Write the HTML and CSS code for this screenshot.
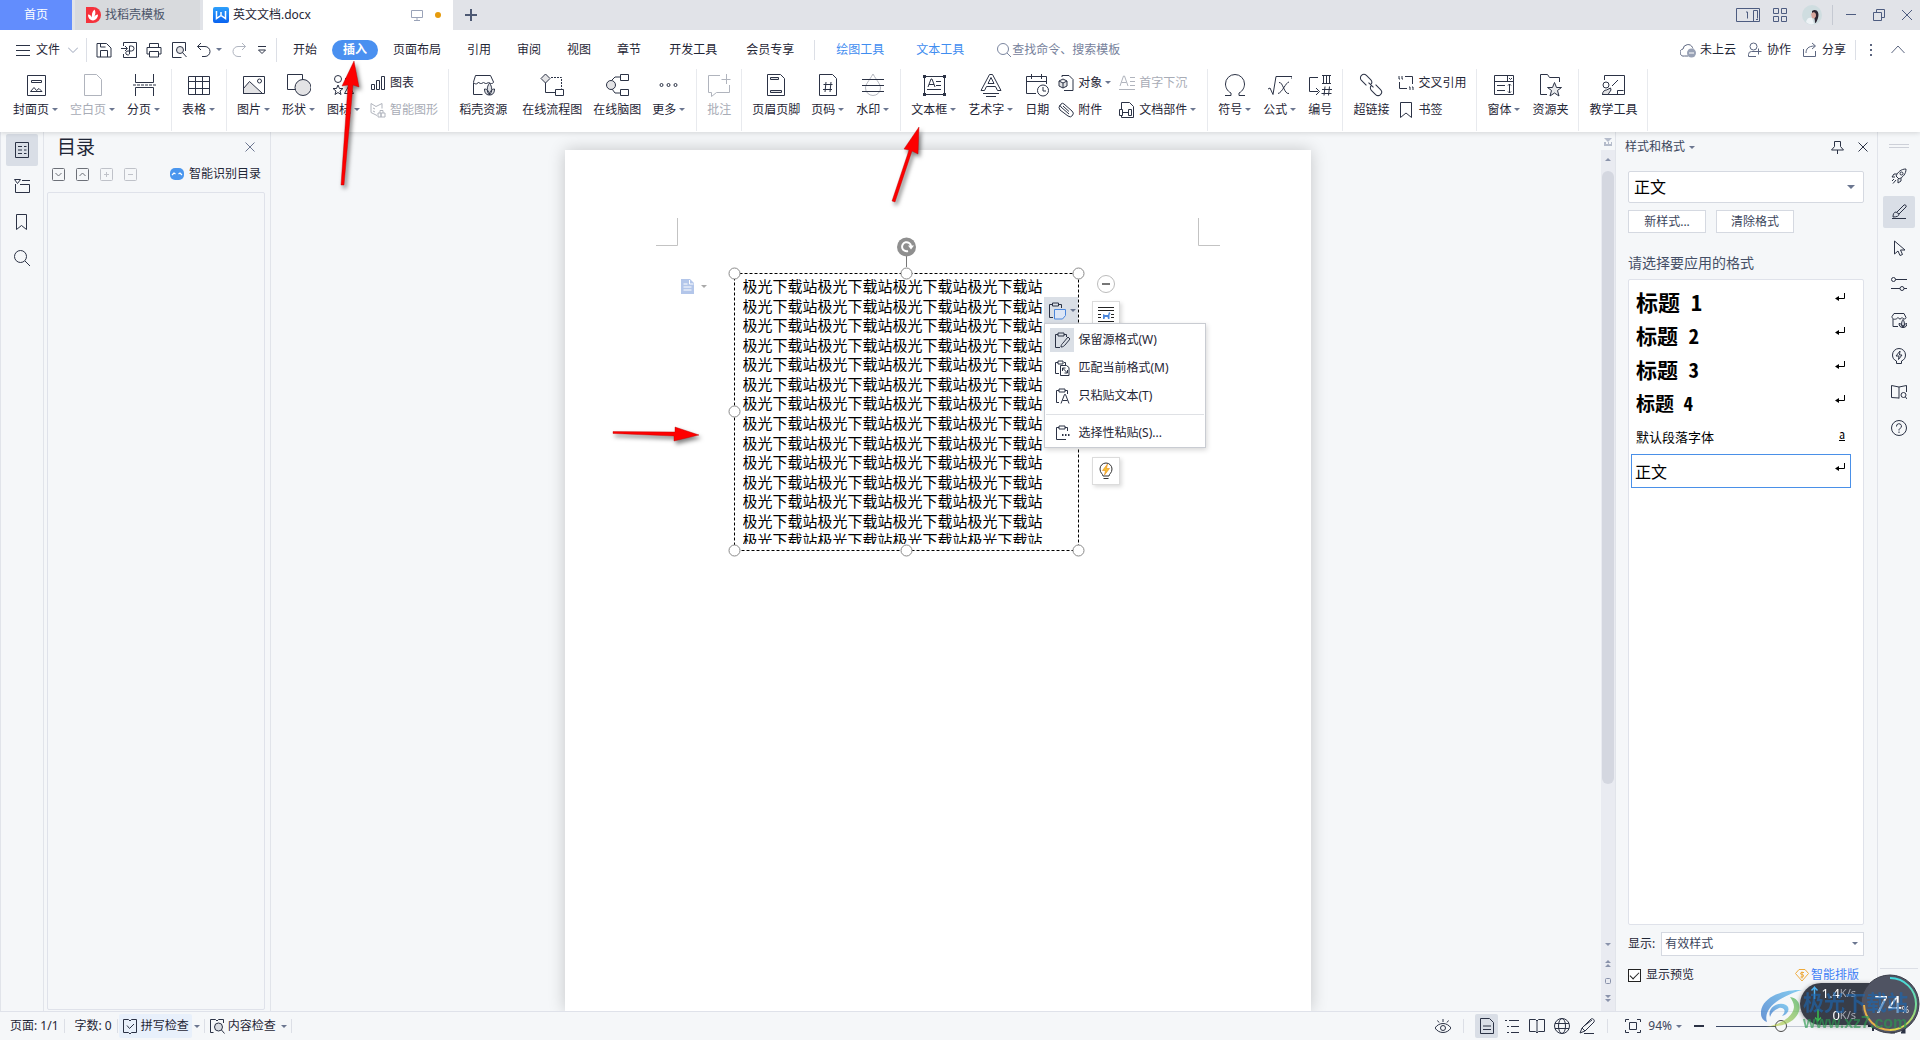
FILE: index.html
```html
<!DOCTYPE html>
<html lang="zh-CN">
<head>
<meta charset="utf-8">
<title>英文文档.docx</title>
<link rel="stylesheet" href="styles.css">
</head>
<body>
<header class="top">
  <div class="titlebar">
    <button class="tab tab-home">首页</button>
    <button class="tab tab-idle">
      <svg class="i16 logo" viewBox="0 0 16 16"><path d="M1 0h7a8 8 0 0 1 0 16H1z" fill="#f5323c"/><path d="M8 13.500C4.500 13 3 10.500 3 7.500c2 0 3.500 1.500 4 3C6.500 8 7 4.500 9.500 2.500c1.500 2.500 1 5-.5 7.500 1-1.500 2-2.500 4-2.500 0 3-2 5.500-5 6z" fill="#fff"/></svg>
      找稻壳模板</button>
    <button class="tab tab-active">
      <svg class="i16 logo" viewBox="0 0 16 16"><defs><linearGradient id="wg" x1="0" y1="0" x2="0" y2="1"><stop offset="0" stop-color="#2ea0fb"/><stop offset="1" stop-color="#0a63f0"/></linearGradient></defs><rect width="16" height="16" rx="2" fill="url(#wg)"/><path d="M3.500 4v7.500L8 8.500l4.500 3V4M8 8.500V5" fill="none" stroke="#fff" stroke-width="1.500"/></svg>
      <span class="grow">英文文档.docx</span>
      <svg class="i12 soft" viewBox="0 0 12 12"><path d="M.5 1.500h11v7H.5zM6 8.500V11M3 11.500h6"/></svg>
      <span class="dot"></span>
    </button>
    <button class="plus" aria-label="新建"><svg class="i12" viewBox="0 0 12 12"><path d="M6 0v12M0 6h12" stroke-width="2"/></svg></button>
    <div class="window-tools">
      <svg class="w24" viewBox="0 0 24 16"><path d="M.5 1.500h23v13H.5zM10 5h1.500v6.500M17.500 14V3.500h4v8M20 12.500h2"/></svg>
      <svg class="i16" viewBox="0 0 16 16"><path d="M1.500 1.500h5v5h-5zM9.500 1.500h5v5h-5zM1.500 9.500h5v5h-5zM9.500 9.500h5v5h-5z"/></svg>
      <svg class="i20 logo" viewBox="0 0 20 20"><circle cx="10" cy="10" r="10" fill="#cfdde0"/><path d="M10 6c4-3 8 1 6 7-1 3-2 5-3 5 0-4-1-7-3-9z" fill="#2b2430"/><path d="M9 9c2-3 5-2 5 1s-2 4-4 3z" fill="#d8a59c"/><path d="M4 17c1-4 3-5 6-4l2 6c-3 1-6 0-8-2z" fill="#eef3f6"/></svg>
      <span class="bar bar-tall"></span>
      <button aria-label="最小化"><svg class="i12" viewBox="0 0 12 12"><path d="M1 5.500h10"/></svg></button>
      <button aria-label="还原"><svg class="i12" viewBox="0 0 12 12"><path d="M.5 3.500h8v8h-8zM3.500 3V.5h8v8H9"/></svg></button>
      <button aria-label="关闭"><svg class="i12" viewBox="0 0 12 12"><path d="M1 1l10 10M11 1L1 11"/></svg></button>
    </div>
  </div>

  <nav class="menubar">
    <button class="file"><svg class="i16" viewBox="0 0 16 16"><path d="M1 3.500h14M1 8.500h14M1 13.500h14"/></svg>文件<svg class="i10 soft" viewBox="0 0 10 10"><path d="M0 2.500l5 5 5-5"/></svg></button>
    <span class="bar bar-quick"></span>
    <div class="quick">
      <svg class="i16" viewBox="0 0 16 16"><path d="M1 1.500h9.500l4.500 4.500v9H1zM4.500 15V8.500h7V15M4.500 1.500V5h5"/></svg>
      <svg class="i16" viewBox="0 0 16 16"><path d="M2.500 4V.5h13v15h-13V12M0 6.500h6M4 4l2.500 2.500L4 9M8.500 12V4h2a2 2 0 0 1 0 5H7a2 2 0 1 0 1.500 3"/></svg>
      <svg class="i16" viewBox="0 0 16 16"><path d="M3.500 5V1.500h9V5M3.500 12H1V5.500h14V12h-2.500M3.500 9.500h9v5.500h-9z"/></svg>
      <svg class="i16" viewBox="0 0 16 16"><path d="M14.500 9V.5h-13v15h9"/><circle cx="9" cy="8" r="3.500" fill="#e3e3e5"/><path d="M11.500 10.500l4 4.500"/></svg>
      <svg class="i16" viewBox="0 0 16 16"><path d="M5 1L1.500 4.500 5 8M1.500 4.500H9a5 5 0 0 1 0 10H6"/></svg><span class="caret"></span>
      <svg class="i16 faint" viewBox="0 0 16 16"><path d="M11 1l3.500 3.500L11 8M14.500 4.500H7a5 5 0 0 0 0 10h3"/></svg>
      <svg class="i12" viewBox="0 0 12 12"><path d="M2 2.500h8M2.500 6L6 9.500 9.500 6z"/></svg>
    </div>
    <span class="bar bar-quick"></span>
    <div class="tabs">
      <button>开始</button><button class="on">插入</button><button>页面布局</button><button>引用</button><button>审阅</button><button>视图</button><button>章节</button><button class="wide">开发工具</button><button class="wide">会员专享</button>
      <span class="bar"></span>
      <button class="blue">绘图工具</button><button class="blue">文本工具</button>
    </div>
    <label class="search"><svg class="i16" viewBox="0 0 16 16"><circle cx="7" cy="7" r="5.500"/><path d="M11 11l4 4"/></svg><input type="text" placeholder="查找命令、搜索模板" aria-label="查找命令"></label>
    <div class="share">
      <button><svg class="i16" viewBox="0 0 16 16"><path d="M8 14H4.500A3.500 3.500 0 0 1 3 7a5 5 0 0 1 9.500-1.500l.5 1"/><circle cx="11.500" cy="11" r="4.500" fill="#98a1b5" stroke="none"/><path d="M9 11h5" stroke="#fff"/></svg>未上云</button>
      <button><svg class="i16" viewBox="0 0 16 16"><circle cx="6.500" cy="4.500" r="3.500"/><path d="M9 14.500H1.500v-2a3 3 0 0 1 3-3H9M11.500 6.500v6M8.500 9.500h6"/></svg>协作</button>
      <button><svg class="i16" viewBox="0 0 16 16"><path d="M1.500 7v7.500h12V9M4 11c0-4 2-7 9-7M10 1l3.500 3L10 7"/></svg>分享</button>
      <span class="bar"></span>
      <button aria-label="更多"><svg class="i16" viewBox="0 0 16 16"><path d="M8 2v2M8 7v2M8 12v2" stroke-width="2"/></svg></button>
      <button aria-label="收起"><svg class="i16" viewBox="0 0 16 16"><path d="M1.500 11L8 4l6.500 7"/></svg></button>
    </div>
  </nav>

  <div class="ribbon">
    <div class="group">
      <button class="big"><svg viewBox="0 0 24 24"><path d="M3.500 2.500h18v20h-18zM7.500 7.500h10v2h-10zM6.500 18.500l3.500-4 2.500 3 2.500-2 3 3z"/></svg><span>封面页<i class="caret"></i></span></button>
      <button class="big off"><svg viewBox="0 0 24 24"><path d="M3.500 1.500h12l5 5v16h-17z"/></svg><span>空白页<i class="caret"></i></span></button>
      <button class="big"><svg viewBox="0 0 24 24"><path d="M3.500 1v8.500h18V1M3.500 23v-8.500h18V23"/><path d="M1 12h23" stroke-dasharray="3 1"/></svg><span>分页<i class="caret"></i></span></button>
    </div>
    <div class="group">
      <button class="big"><svg viewBox="0 0 24 24"><path d="M1.500 3.500h21v18h-21zM1.500 8.500h21M1.500 15.500h21M8.500 3.500v18M15.500 3.500v18"/></svg><span>表格<i class="caret"></i></span></button>
    </div>
    <div class="group">
      <button class="big"><svg viewBox="0 0 24 24"><path d="M1.500 20.500v-5l6-7 13 12z" fill="#e3e3e5"/><path d="M1.500 3.500h21v17h-21z"/><circle cx="17.500" cy="8" r="2"/></svg><span>图片<i class="caret"></i></span></button>
      <button class="big"><svg viewBox="0 0 24 24"><path d="M.5 1.500h15v15H.5z"/><circle cx="16" cy="14.500" r="8" fill="#e3e3e5"/></svg><span>形状<i class="caret"></i></span></button>
      <button class="big"><svg viewBox="0 0 24 24"><circle cx="6" cy="6" r="3.500"/><path d="M17 2.500l4 3.500-4 4-4-4zM17 12.500l4.500 8h-9zM6 12l1.500 3.500h3.500l-3 2.500 1 3.500-3-2-3 2 1-3.500-3-2.500h3.500z"/></svg><span>图标<i class="caret"></i></span></button>
      <div class="pair">
        <button><svg class="i16" viewBox="0 0 16 16"><path d="M1.500 9.500h3v5h-3zM6.500 5.500h3v9h-3zM11.500 1.500h3v13h-3z"/></svg>图表</button>
        <button class="off"><svg class="i16" viewBox="0 0 16 16"><path d="M1 1.500l5 3 6-3v5M1 1.500v9l6 3M6 4.500M3 6l2 1M3 9l2 1M8 11h3v4H8zM11 11h4v4h-4zM10 11V8.500h3V11"/></svg>智能图形</button>
      </div>
    </div>
    <div class="group">
      <button class="big roomy"><svg viewBox="0 0 24 24"><path d="M2.500 10v11.500h9M4.500 2.500h15l3 6.500c0 2-4 2-5 0-1 2-4 2-5 0-1 2-4 2-5 0-1 3-5 2-5 0z"/><path d="M18.500 22c-3-3-3-8 0-12 3 4 3 9 0 12zM18.500 22c-4 0-5-3-5-6 3 0 5 3 5 6zM18.500 22c4 0 5-3 5-6-3 0-5 3-5 6z" fill="#dfe1e5"/></svg><span>稻壳资源</span></button>
      <button class="big"><svg viewBox="0 0 24 24"><path d="M5.500 1l4.500 4.500-4.500 4.500L1 5.500z" fill="#e3e3e5"/><path d="M5.500 10v9.500h10M15.500 16.500h8v6h-8z"/><path d="M11 4.500h10.500v11" stroke-dasharray="2 1"/></svg><span>在线流程图</span></button>
      <button class="big"><svg viewBox="0 0 24 24"><path d="M15.500 1.500h8v6h-8zM15.500 16.500h8v6h-8zM7 7l3-3h5M7 16l3 4h5"/><circle cx="6" cy="12" r="4.500" fill="#e3e3e5"/></svg><span>在线脑图</span></button>
      <button class="big"><svg viewBox="0 0 24 24"><circle cx="4.500" cy="12" r="1.500"/><circle cx="11.500" cy="12" r="1.500"/><circle cx="18.500" cy="12" r="1.500"/></svg><span>更多<i class="caret"></i></span></button>
    </div>
    <div class="group">
      <button class="big off"><svg viewBox="0 0 24 24"><path d="M13 2.500H1.500v17h3v4l5-4h13V12M19.500 1v10M14.500 6.500h9"/></svg><span>批注</span></button>
    </div>
    <div class="group">
      <button class="big"><svg viewBox="0 0 24 24"><path d="M3.500 1.500h13l4 4v17h-17z"/><path d="M6.500 4.500h8v2h-8zM6.500 17.500h11v2h-11z" fill="#e3e3e5"/></svg><span>页眉页脚</span></button>
      <button class="big"><svg viewBox="0 0 24 24"><path d="M3.500 1.500h13l4 4v17h-17zM10 9l-1 10M15 9l-1 10M7.500 11.500h9M7 16.500h9"/></svg><span>页码<i class="caret"></i></span></button>
      <button class="big"><svg viewBox="0 0 24 24"><path d="M12 1c4 7 7.500 10 7.500 14a7.500 7.500 0 0 1-15 0C4.500 11 8 8 12 1z" stroke="#b4b7bf"/><path d="M1 6.500h22M1 12.500h22M1 18.500h22"/></svg><span>水印<i class="caret"></i></span></button>
    </div>
    <div class="group">
      <button class="big"><svg viewBox="0 0 24 24"><path d="M2.500 3.500h20v18h-20zM5 16.500h14M14 8.500h5M14 12.500h5M6 14l3-8h1l3 8M7 11.500h5"/><path d="M1 2h3v3H1zM21 2h3v3h-3zM1 20h3v3H1zM21 20h3v3h-3z" fill="#2b3245" stroke="none"/></svg><span>文本框<i class="caret"></i></span></button>
      <button class="big"><svg viewBox="0 0 24 24"><path d="M2 17.500L10.500 1.500h3L22 17.500h-3.500l-2-4h-9l-2 4zM9 10.500h6l-3-6zM4 20.500h16M7 23.500h10"/></svg><span>艺术字<i class="caret"></i></span></button>
      <button class="big"><svg viewBox="0 0 24 24"><path d="M11 20.500H1.500v-17h20V11M1.500 8.500h20M6.500 1v5M16.500 1v5"/><circle cx="18" cy="17.500" r="5.500" fill="#fff"/><path d="M18 14v4h3"/></svg><span>日期</span></button>
      <div class="pair">
        <button><svg class="i16" viewBox="0 0 16 16"><path d="M4 2V.5h7l4 4v11H6"/><path d="M5 4l4 2v5l-4 2-4-2V6zM1 6l4 2 4-2M5 8v5" fill="#e3e3e5"/></svg><span>对象<i class="caret"></i></span></button>
        <button><svg class="i16" viewBox="0 0 16 16"><path d="M11 12L3 5a2 2 0 0 1 3-3l8 7a3 3 0 0 1-4 5L2 8a4 4 0 0 1 0-5M5 4l6 5.500"/></svg>附件</button>
      </div>
      <div class="pair">
        <button class="off"><svg class="i16" viewBox="0 0 16 16"><path d="M1 11L4.500 1h1L9 11M2.500 7.500h5M11 2.500h5M11 6.500h5M11 10.500h5M0 14.500h16"/></svg>首字下沉</button>
        <button><svg class="i16" viewBox="0 0 16 16"><path d="M2.500 7V.5h8l4 4v11H2.500V14M.5 7.500h3v6h-3zM9.500 7.500h3v6h-3zM3.500 10.500h6"/></svg><span>文档部件<i class="caret"></i></span></button>
      </div>
    </div>
    <div class="group">
      <button class="big"><svg viewBox="0 0 24 24"><path d="M2 22.500h6V20C4 18 2.500 14 2.500 11a9.500 9.500 0 0 1 19 0c0 3-1.500 7-5.500 9v2.500h6"/></svg><span>符号<i class="caret"></i></span></button>
      <button class="big"><svg viewBox="0 0 24 24"><path d="M0 16l2-1 3 6.500L8 3.500h16V6M11 9.500c4-1 5 12 10 11M21 9c-3 0-7 11-11 11.500"/></svg><span>公式<i class="caret"></i></span></button>
      <button class="big"><svg viewBox="0 0 24 24"><path d="M10 4.500H1.500v14H10M8 15l3.500 3.500L8 22M14 2.500h9M14 10.500h9M15.500 2.500v8M18.500 2.500v8M21.500 2.500v8M17 13.500l-1 9M21.500 13.500l-1 9M14 16.500h10M13.500 20.500h10"/></svg><span>编号</span></button>
    </div>
    <div class="group">
      <button class="big"><svg viewBox="0 0 24 24"><g transform="rotate(45 12 12)"><path d="M9 15.500H2a3.500 3.500 0 0 1 0-7h6a3.500 3.500 0 0 1 3.500 3.500M15 8.500h7a3.500 3.500 0 0 1 0 7h-6a3.500 3.500 0 0 1-3.500-3.500M8.500 12h7"/></g></svg><span>超链接</span></button>
      <div class="pair">
        <button><svg class="i16" viewBox="0 0 16 16"><path d="M7 1.500h7.500V9M1.500 7v6.500H9M1 1v3h1M4 1v3h1M11 12h1v3M14 12h1v3"/></svg>交叉引用</button>
        <button><svg class="i16" viewBox="0 0 16 16"><path d="M2.500.5h11v15L8 11l-5.500 4.500z"/></svg>书签</button>
      </div>
    </div>
    <div class="group">
      <button class="big"><svg viewBox="0 0 24 24"><path d="M2.500 2.500h19v19h-19zM2.500 8.500h19M15.500 2.500v6M17 5l1.500 1.500L20 5M5 12.500h8M5 17.500h8M17.500 11v9M16 12.500l1.500-1.500 1.500 1.500M16 18.500l1.500 1.500 1.500-1.500"/></svg><span>窗体<i class="caret"></i></span></button>
      <button class="big"><svg viewBox="0 0 24 24"><path d="M9 21.500H2.500v-20h7l2 3h10V9"/><path d="M16.500 9.500l2 5h5l-4 3 1.500 5.500-4.500-3-4.500 3 1.500-5.500-4-3h5z" fill="#e9eaec"/></svg><span>资源夹</span></button>
    </div>
    <div class="group">
      <button class="big"><svg viewBox="0 0 24 24"><path d="M3.500 7V2.500h20v19H1M16.500 21v-3.500h6M11 13l6-6"/><circle cx="5" cy="12" r="3"/><path d="M1.500 21.500c0-3 2-4.500 4-4.500l4-2 .5 2-3 4.500z" fill="#e3e3e5"/></svg><span>教学工具</span></button>
    </div>
  </div>
</header>

<main class="work">
  <aside class="rail rail-left">
    <button class="on" aria-label="目录"><svg class="i16" viewBox="0 0 16 16"><path d="M1.500.5h13v15h-13zM4 4.500h4M4 8h4M4 11.500h4M10 4.500h2.500M10 8h2.500M10 11.500h2.500"/></svg></button>
    <button aria-label="章节"><svg class="i16" viewBox="0 0 16 16"><path d="M.5 1.500h6l-3 4zM8 2.500h8M1.500 6v8.500h14v-8H6"/></svg></button>
    <button aria-label="书签"><svg class="i16" viewBox="0 0 16 16"><path d="M2.500.5h10v15l-5-4-5 4z"/></svg></button>
    <button aria-label="查找"><svg class="i16" viewBox="0 0 16 16"><circle cx="6.500" cy="6.500" r="6"/><path d="M11 11l5 5"/></svg></button>
  </aside>

  <section class="outline">
    <div class="outline-head"><h2>目录</h2><button aria-label="关闭"><svg class="i10 soft2" viewBox="0 0 10 10"><path d="M.5.5l9 9M9.500.5l-9 9"/></svg></button></div>
    <div class="outline-tools">
      <button aria-label="展开"><svg class="i13" viewBox="0 0 13 13"><rect x=".5" y=".5" width="12" height="12" rx="1"/><path d="M3.500 5l3 3 3-3"/></svg></button>
      <button aria-label="折叠"><svg class="i13" viewBox="0 0 13 13"><rect x=".5" y=".5" width="12" height="12" rx="1"/><path d="M3.500 8l3-3 3 3"/></svg></button>
      <button class="dim" aria-label="增加"><svg class="i13" viewBox="0 0 13 13"><rect x=".5" y=".5" width="12" height="12" rx="1"/><path d="M4 6.500h5M6.500 4v5"/></svg></button>
      <button class="dim" aria-label="减少"><svg class="i13" viewBox="0 0 13 13"><rect x=".5" y=".5" width="12" height="12" rx="1"/><path d="M4 6.500h5"/></svg></button>
      <button class="smart"><svg viewBox="0 0 14 12"><rect width="14" height="12" rx="5" fill="#4a96ee"/><path d="M2 7l2-2 1.500 1M8.500 6L10 5l2 2" fill="none" stroke="#fff" stroke-width="1.200"/></svg>智能识别目录</button>
    </div>
    <div class="outline-box"></div>
  </section>

  <section class="canvas">
    <article class="page">
      <svg class="marks" viewBox="0 0 564 28"><path d="M0 27.500h21.500V0M564 27.500h-21.500V0"/></svg>
      <div class="docmark"><svg viewBox="0 0 13 15"><path d="M0 0h9l4 4v11H0z" fill="#b3c6ea"/><path d="M2.500 5h4M2.500 8h8M2.500 11h8M8.500 1v4h4" stroke="#fff" fill="none"/></svg><i class="caret"></i></div>
      <div class="textbox"><div class="lines">
        <p>极光下载站极光下载站极光下载站极光下载站</p><p>极光下载站极光下载站极光下载站极光下载站</p><p>极光下载站极光下载站极光下载站极光下载站</p><p>极光下载站极光下载站极光下载站极光下载站</p><p>极光下载站极光下载站极光下载站极光下载站</p><p>极光下载站极光下载站极光下载站极光下载站</p><p>极光下载站极光下载站极光下载站极光下载站</p><p>极光下载站极光下载站极光下载站极光下载站</p><p>极光下载站极光下载站极光下载站极光下载站</p><p>极光下载站极光下载站极光下载站极光下载站</p><p>极光下载站极光下载站极光下载站极光下载站</p><p>极光下载站极光下载站极光下载站极光下载站</p><p>极光下载站极光下载站极光下载站极光下载站</p><p>极光下载站极光下载站极光下载站极光下载站</p>
      </div></div>
      <svg class="frame" viewBox="0 0 360 330"><path d="M7.500 40.500h344v277h-344z" stroke="#000" stroke-dasharray="3 2"/><path d="M179.500 22v12" stroke="#777"/><circle cx="179.500" cy="14" r="9.500" fill="#8f8f8f" stroke="none"/><path d="M181 18a4.500 4.500 0 1 1 3-5" stroke="#fff" stroke-width="2"/><path d="M181 12.500h6l-3 4z" fill="#fff" stroke="none"/><g fill="#fff" stroke="#8a8a8a"><circle cx="7.500" cy="40.500" r="5.500"/><circle cx="179.500" cy="40.500" r="5.500"/><circle cx="351.500" cy="40.500" r="5.500"/><circle cx="7.500" cy="178.500" r="5.500"/><circle cx="7.500" cy="317.500" r="5.500"/><circle cx="179.500" cy="317.500" r="5.500"/><circle cx="351.500" cy="317.500" r="5.500"/></g></svg>
      <div class="side-tools">
        <button class="round" aria-label="收起"><svg viewBox="0 0 18 18"><circle cx="9" cy="9" r="8.500" stroke="#bbb"/><path d="M5 9h8" stroke="#777" stroke-width="2"/></svg></button>
        <button class="card" aria-label="布局选项"><svg class="i18" viewBox="0 0 18 18"><path d="M1 1.500h16M1 4.500h16M1 8.500h3M1 11.500h3M14 8.500h3M14 11.500h3M1 15.500h16" stroke="#222"/><path d="M6 8l2 1h3l1-3 1.500 1-1 2v4h-1.500l-.5-2H8l-.5 2H6z" fill="#4a86dc" stroke="none"/></svg></button>
        <button class="card idea" aria-label="提示"><svg class="i18" viewBox="0 0 18 18"><path d="M6 14c0-2-3-3-3-7a6 6 0 0 1 12 0c0 4-3 5-3 7zM6.500 16.500h5" stroke="#333"/><path d="M10.500 2L5.500 8.500h3L7.500 13l5-6.500h-3z" fill="#f8c12f" stroke="#e88a1a" stroke-width=".6"/></svg></button>
      </div>
      <button class="paste" aria-label="粘贴选项"><svg viewBox="0 0 18 18"><path d="M5 15.500H1.500v-13H5M11 2.500h2.500V6M4.500 1h6v3h-6z"/><path d="M6.500 7.500h11v6l-3 3.500h-8z" fill="#dce6f6" stroke="#4a86dc"/></svg><i class="caret"></i></button>
      <div class="menu">
        <button><span class="pic on"><svg class="i16" viewBox="0 0 16 16"><path d="M6 15.500H1.500v-13H4M10 2.500h2.500V5M4 1h6v3H4zM7 15c0-2 1-3 2-4l5-6 2 2-5 6c-1 1-2 2-4 2z"/></svg></span>保留源格式(W)</button>
        <button><span class="pic"><svg class="i16" viewBox="0 0 16 16"><path d="M5 13.500H1.500v-11H4M10 2.500h1.500V5M4 1h5v3H4zM6.500 5.500h6l2.500 2v8H6.500zM8.500 11V8h3M8.500 8l5 5M13.500 10v3h-3"/></svg></span>匹配当前格式(M)</button>
        <button><span class="pic"><svg class="i16" viewBox="0 0 16 16"><path d="M5 14.500H2.500v-12H5M11 2.500h2.500V6M5 1h6v3H5zM7 15.500l3.500-9h1l3.500 9M8.500 12.500h5"/></svg></span>只粘贴文本(T)</button>
        <hr>
        <button><span class="pic"><svg class="i16" viewBox="0 0 16 16"><path d="M12 14.500H2.500v-12H5M11 2.500h2.500V6M5 1h6v3H5z"/><path d="M8 10h1.500M11 10h1.500M14 10h1.500" stroke-width="2"/></svg></span>选择性粘贴(S)...</button>
      </div>
      <svg class="arrow arrow-side" viewBox="0 0 90 20"><path d="M0 6.500L62 7V2l24 8-25 6V11L0 8.500z"/></svg>
    </article>
  </section>

  <div class="scroll">
    <svg class="ruler" viewBox="0 0 14 18"><path d="M3 6h8L7 10zM3 10h2v2h2v-2h1v2h2v-2h1v4H3z"/></svg>
    <svg class="tri" viewBox="0 0 14 6"><path d="M4 5h6L7 2z"/></svg>
    <div class="thumb"></div>
    <div class="steps">
      <svg viewBox="0 0 14 8"><path d="M4 2h6L7 5z"/></svg>
      <svg viewBox="0 0 14 8"><path d="M4 4h6L7 1zM4 8h6L7 5z"/></svg>
      <svg viewBox="0 0 14 8"><rect x="4.500" y="1.500" width="5" height="5" rx="1" fill="none" stroke="#8a93ab"/></svg>
      <svg viewBox="0 0 14 8"><path d="M4 0h6L7 3zM4 4h6L7 7z"/></svg>
    </div>
  </div>

  <aside class="styles">
    <div class="styles-head"><span class="grow">样式和格式<i class="caret"></i></span>
      <button aria-label="固定"><svg class="i13" viewBox="0 0 13 13"><path d="M3.500.5h6v5l3 3.500H.5l3-3.500zM6.500 9v4"/></svg></button>
      <button aria-label="关闭"><svg class="i10" viewBox="0 0 10 10"><path d="M.5.5l9 9M9.500.5l-9 9"/></svg></button></div>
    <div class="pick pick-big"><select aria-label="当前样式"><option>正文</option></select></div>
    <div class="actions"><button>新样式...</button><button>清除格式</button></div>
    <h3>请选择要应用的格式</h3>
    <ul class="list">
      <li class="h1"><span>标题 1</span><svg viewBox="0 0 10 9"><path d="M9.500 0v5.500H1"/><path class="tip" d="M0 5.500L4 3v5z"/></svg></li>
      <li class="h2"><span>标题 2</span><svg viewBox="0 0 10 9"><path d="M9.500 0v5.500H1"/><path class="tip" d="M0 5.500L4 3v5z"/></svg></li>
      <li class="h2"><span>标题 3</span><svg viewBox="0 0 10 9"><path d="M9.500 0v5.500H1"/><path class="tip" d="M0 5.500L4 3v5z"/></svg></li>
      <li class="h4"><span>标题 4</span><svg viewBox="0 0 10 9"><path d="M9.500 0v5.500H1"/><path class="tip" d="M0 5.500L4 3v5z"/></svg></li>
      <li class="small"><span>默认段落字体</span><u>a</u></li>
      <li class="sel"><span>正文</span><svg viewBox="0 0 10 9"><path d="M9.500 0v5.500H1"/><path class="tip" d="M0 5.500L4 3v5z"/></svg></li>
    </ul>
    <div class="show"><label for="show">显示:</label><div class="pick"><select id="show"><option>有效样式</option></select></div></div>
    <div class="preview"><label><input type="checkbox" checked>显示预览</label>
      <a href="#"><svg viewBox="0 0 14 14"><path d="M4 1.500h6l3.500 4L7 13 .5 5.500z"/><path d="M9 4.500H6L5.500 6l3 1L8 9H5.500M7 3.500v7"/></svg>智能排版</a></div>
  </aside>

  <aside class="rail rail-right">
    <span class="grip"></span>
    <button aria-label="快捷"><svg class="i16" viewBox="0 0 16 16"><path d="M15 1c-5 0-8 3-10 7l3 3c4-2 7-5 7-10zM6 6H3L1 9h3M10 10v3l-3 2v-4M3 11l-2 2M5 12l-3 3.500"/><circle cx="10.500" cy="5.500" r="1.500"/></svg></button>
    <button class="on" aria-label="样式"><svg class="i16" viewBox="0 0 16 16"><path d="M1 14.500h14M2 13c0-3 1-5 3-5l3 2c0 2-2 3-6 3zM6 8l7-7c1-1 3 1 2 2L8 10"/></svg></button>
    <button aria-label="选择"><svg class="i16" viewBox="0 0 16 16"><path d="M3.500 1v13l3.500-3 2 4.500 2.500-1L9.500 10H14z"/></svg></button>
    <button aria-label="属性"><svg class="i16" viewBox="0 0 16 16"><circle cx="2.500" cy="3.500" r="2"/><path d="M4.500 3.500H16M0 12.500h9M13 12.500h3"/><circle cx="11" cy="12.500" r="2"/></svg></button>
    <button aria-label="稻壳"><svg class="i16" viewBox="0 0 16 16"><path d="M2 7v7.500h5M3 1.500h10l2 4c0 2-3 2-4 0-1 2-3 2-4 0-1 2-6 3-6-1z"/><path d="M12 15.500c-2-2-2-5 0-8 2 3 2 6 0 8zM12 15.500c-3 0-4-2-4-4 2 0 4 2 4 4zM12 15.500c3 0 4-2 4-4-2 0-4 2-4 4z" fill="#cfd3db"/></svg></button>
    <button aria-label="灵感"><svg class="i16" viewBox="0 0 16 16"><path d="M5.500 13C3 12 1.500 10 1.500 7a6.500 6.500 0 0 1 13 0c0 3-1.500 5-4 6v2.500h-5zM9 3L5 8h3l-.5 3.500L11 7H8.500z"/></svg></button>
    <button aria-label="查阅"><svg class="i16" viewBox="0 0 16 16"><path d="M8 3v11.500M8 14L.5 13.500v-12L8 3l7.500-1.500V8"/><circle cx="12.500" cy="11" r="2.500"/><path d="M14.500 13l1.500 2"/></svg></button>
    <button aria-label="帮助"><svg class="i16" viewBox="0 0 16 16"><circle cx="8" cy="8" r="7.500"/><path d="M5.500 6.500a2.500 2.500 0 1 1 3.500 2c-1 .5-1 1-1 2M8 11.500v1.500"/></svg></button>
    <span class="foot"></span>
  </aside>
</main>

<footer class="status">
  <span class="cell">页面: 1/1</span>
  <span class="cell">字数: 0</span>
  <button class="check hot"><svg class="i16" viewBox="0 0 16 16"><path d="M6.500 14.500h-5v-13h5L8 3l1.500-1.500h5v13h-5L8 16zM5 7.500l2.500 3L12 6"/></svg>拼写检查</button><i class="caret"></i>
  <span class="bar"></span>
  <button class="check"><svg class="i16" viewBox="0 0 16 16"><path d="M4.500 14.500h-3v-13h5L8 3l1.500-1.500h5V5"/><circle cx="9.500" cy="9" r="4" fill="#d9dce2"/><path d="M12.500 12l3 3.500"/></svg>内容检查</button><i class="caret"></i>
  <span class="bar"></span>
  <span class="grow"></span>
  <button aria-label="护眼"><svg class="i16" viewBox="0 0 16 16"><path d="M0 10c4-6 12-6 16 0-4 6-12 6-16 0zM8 1v3M2.500 2.500l1.500 2M13.500 2.500L12 4.500"/><circle cx="8" cy="10" r="2.500"/></svg></button>
  <span class="bar"></span>
  <div class="views">
    <button class="on" aria-label="页面"><svg class="i16" viewBox="0 0 16 16"><path d="M1.500.5h9l4 4v11h-13zM4 8h8M4 11.500h8"/></svg></button>
    <button aria-label="大纲"><svg class="i16" viewBox="0 0 16 16"><path d="M1 2.500h2M5 2.500h10M3 8.500h2M7 8.500h8M3 14.500h2M7 14.500h8"/></svg></button>
    <button aria-label="阅读"><svg class="i16" viewBox="0 0 16 16"><path d="M.5 1.500h6L8 3l1.500-1.500h6v12h-6L8 15l-1.500-1.500h-6zM8 3v12"/></svg></button>
    <button aria-label="网页"><svg class="i16" viewBox="0 0 16 16"><circle cx="8" cy="8" r="7.500"/><ellipse cx="8" cy="8" rx="3.500" ry="7.500"/><path d="M1 5.500h14M1 10.500h14"/></svg></button>
    <button aria-label="写作"><svg class="i16" viewBox="0 0 16 16"><path d="M5 15.500h10M1 15l2-5 9-9c2-1 4 1 3 3l-9 9zM3 10l3 3M5 8l8-6"/></svg></button>
  </div>
  <span class="bar"></span>
  <button aria-label="适合"><svg class="i16" viewBox="0 0 16 16"><path d="M.5 4V1.500H4M12 1.500h3.500V4M15.500 12v2.500H12M4 14.500H.5V12M4.500 4.500h7v7h-7z"/></svg></button>
  <span class="zoom">94%<i class="caret"></i></span>
  <button aria-label="缩小"><svg class="i10" viewBox="0 0 10 10"><path d="M0 5h10" stroke-width="2"/></svg></button>
  <input class="slider" type="range" min="0" max="100" value="44" aria-label="缩放">
  <button aria-label="放大"><svg class="i10" viewBox="0 0 10 10"><path d="M0 5h10M5 0v10" stroke-width="2"/></svg></button>
  <button aria-label="全屏"><svg class="i16" viewBox="0 0 16 16"><path d="M1.500 5V1.500H5M11 1.500h3.500V5M14.500 11v3.500H11M5 14.500H1.500V11M2 2l4 4M14 2l-4 4M2 14l4-4M14 14l-4-4" stroke-width="2"/></svg></button>
</footer>

<svg class="arrow arrow-insert" viewBox="0 0 30 130"><path d="M18 0L23 26 17 24 8 124 5 124 12 24 6 25z"/></svg>
<svg class="arrow arrow-box" viewBox="0 0 40 80"><path d="M29 0L28 27 22 24 5 75 2 74 19 23 14 22z"/></svg>

<div class="meter">
  <div class="speed"><span><b class="up">↑</b>1.4<small>K/s</small></span><span><b class="down">↓</b>0<small>K/s</small></span></div>
  <div class="ball"><svg viewBox="0 0 60 60"><defs><linearGradient id="rg" x1="0" y1="0" x2="0" y2="1"><stop offset="0" stop-color="#45dbe0"/><stop offset=".6" stop-color="#7fdc8c"/><stop offset="1" stop-color="#e6d84a"/></linearGradient></defs><circle cx="30" cy="30" r="29" fill="#4f5362" stroke="#3a3d49"/><path d="M30 4a26 26 0 0 1 0 52" stroke="url(#rg)" stroke-width="2"/><path d="M30 56A26 26 0 0 1 4 31" stroke="#e8b04a" stroke-width="2"/></svg><span>74<small>%</small></span></div>
</div>
<div class="brand">
  <svg viewBox="0 0 42 40"><defs><linearGradient id="b1" x1="1" y1="0" x2="0" y2="1"><stop offset="0" stop-color="#49b6ec"/><stop offset="1" stop-color="#1b5fc0"/></linearGradient><linearGradient id="b2" x1="1" y1="0" x2="0" y2="1"><stop offset="0" stop-color="#36a84a"/><stop offset="1" stop-color="#d9d84a"/></linearGradient></defs><path d="M42 1C24 0 0 8 1 25c0 4 3 7 6 8C3 20 18 8 42 1z" fill="url(#b1)"/><path d="M30 8c14 2 12 20-2 26-8 4-17 3-22 4 12-2 27-9 28-20 0-4-2-7-4-10z" fill="url(#b2)"/><path d="M10 28c-3-9 8-16 16-12 5 3 2 10-4 11 5-5 2-9-3-8-5 2-8 5-9 9z" fill="url(#b1)"/></svg>
  <div><strong>极光下载站</strong><em>www.xz7.com</em></div>
</div>
</body>
</html>
```
FILE: styles.css
```css
* { box-sizing: border-box; }
html, body { height: 100%; }
body {
  margin: 0;
  display: flex;
  flex-direction: column;
  overflow: hidden;
  font: 12px/16px "Noto Sans", "Noto Sans CJK SC", sans-serif;
  color: #1f2636;
  background: #f5f7f9;
}
button {
  font: inherit;
  color: inherit;
  background: none;
  border: 0;
  padding: 0;
  display: flex;
  align-items: center;
  white-space: nowrap;
}
h2, h3, p, ul { margin: 0; padding: 0; font-weight: 400; }
svg { fill: none; stroke: #2b3245; flex: none; display: block; }
.i10 { width: 10px; height: 10px; }
.i12 { width: 12px; height: 12px; }
.i13 { width: 13px; height: 13px; }
.i16 { width: 16px; height: 16px; }
.i18 { width: 18px; height: 18px; }
.i20 { width: 20px; height: 20px; }
.w24 { width: 24px; height: 16px; }
.soft { stroke: #9aa3b8; }
.soft2 { stroke: #6d7791; }
.faint { stroke: #b0b5c0; }
.grow { flex: 1; text-align: left; }
.caret {
  display: inline-block;
  border: 3px solid transparent;
  border-top-color: #6b7690;
  border-bottom: 0;
  vertical-align: middle;
  flex: none;
}
.bar { width: 1px; height: 20px; background: #dcdfe6; flex: none; }

/* title bar */
.top { background: #fff; box-shadow: 0 1px 5px rgba(0, 0, 0, .14); position: relative; z-index: 1; }
.titlebar { display: flex; height: 30px; background: #e1e3e8; }
.tab { height: 30px; gap: 4px; margin-right: 3px; }
.tab-home { width: 72px; justify-content: center; background: #628dfd; color: #fff; }
.tab-idle { width: 125px; padding-left: 10px; background: #d8dadd; color: #4b5469; }
.tab-active { width: 250px; padding: 0 12px 0 10px; background: #fff; margin: 0; }
.dot { width: 6px; height: 6px; border-radius: 50%; background: #e69b0c; margin-left: 8px; }
.plus { padding-left: 12px; }
.plus svg { stroke: #4d5973; }
.window-tools { margin-left: auto; display: flex; align-items: center; gap: 12px; padding-right: 7px; }
.window-tools svg { stroke: #4d5c80; }
.window-tools button { margin-left: 4px; }
.window-tools .bar { background: #c5c9d2; margin: 0 -4px 0 -2px; }
.window-tools .i20 { margin-left: 2px; }
.titlebar .logo { stroke: none; }

/* menu bar */
.menubar { display: flex; align-items: center; height: 39px; padding: 0 14px 0 15px; }
.file { gap: 5px; }
.file .i10 { margin-left: 3px; }
.bar-quick { height: 24px; margin: 0 9px 0 8px; }
.quick { display: flex; align-items: center; gap: 9px; }
.quick .caret { margin-left: -5px; }
.tabs { display: flex; align-items: center; gap: 4px; margin-left: -4px; }
.tabs .bar { margin: 0 3px 0 4px; }
.tabs button { height: 20px; padding: 0 11px; border-radius: 10px; }
.tabs .wide { padding: 0 12px 0 13px; }
.tabs .on { background: #4a90f0; color: #fff; font-weight: 700; }
.tabs .blue { color: #3f8df0; padding: 0 14px; }
.search { display: flex; align-items: center; flex: 1; margin-left: 18px; }
.search svg { stroke: #7b86a0; }
.search input { flex: 1; border: 0; background: none; font: inherit; padding: 0; outline: 0; }
.search input::placeholder { color: #76819b; opacity: 1; }
.share { display: flex; align-items: center; gap: 11px; }
.share button { gap: 4px; }
.share .bar { margin: 0 -4px 0 -2px; }
.share svg { stroke: #5c6680; }

/* ribbon */
.ribbon { display: flex; height: 63px; padding-left: 3px; overflow: hidden; }
.group { display: flex; align-items: flex-start; gap: 11px; padding: 4px 10px 0; border-right: 1px solid #e8eaee; height: 62px; }
.big { flex-direction: column; gap: 5px; }
.big svg { width: 24px; height: 24px; }
.roomy { margin-right: 4px; }
.big .caret, .pair .caret { margin: -2px 1px 0 3px; }
.pair { display: flex; flex-direction: column; gap: 11px; padding-top: 2px; margin-left: -2px; }
.pair + .pair { margin-left: -4px; }
.pair button { gap: 4px; }
.off { color: #a8acb6; }
.off svg { stroke: #b0b4bd; }

/* rails */
.work { flex: 1; display: flex; min-height: 0; }
.rail { display: flex; flex-direction: column; align-items: center; gap: 4px; width: 43px; padding-top: 2px; }
.rail button { width: 32px; height: 32px; border-radius: 2px; justify-content: center; }
.rail .on { background: #d9dee6; }
.rail-left { width: 44px; border: 1px solid #e1e4ea; border-width: 0 1px; }
.rail-right { border-left: 1px solid #e1e4ea; padding-top: 12px; }
.grip { width: 20px; height: 4px; border: 1px solid #cdd0d8; border-width: 1px 0; margin-bottom: 8px; flex: none; }
.foot { width: 38px; height: 43px; border-top: 1px solid #dcdfe6; margin-top: auto; }

/* outline */
.outline { width: 227px; display: flex; flex-direction: column; border-right: 1px solid #e1e4ea; padding: 0 5px 1px 3px; }
.outline-head { display: flex; justify-content: space-between; align-items: center; height: 30px; padding: 0 10px; }
.outline-head h2 { font-size: 19px; line-height: 28px; }
.outline-tools { display: flex; align-items: center; gap: 11px; height: 24px; padding: 0 4px 0 5px; margin-bottom: 6px; }
.outline-tools svg { stroke: #6c7078; }
.outline-tools .dim svg { stroke: #bfc2c9; }
.smart { margin-left: auto; gap: 5px; }
.outline-tools .smart svg { width: 14px; height: 12px; stroke: none; }
.outline-box { flex: 1; border: 1px solid #dfe2ea; border-radius: 2px; }

/* document */
.canvas { flex: 1; display: flex; justify-content: center; padding: 18px 0 0 3px; overflow: hidden; }
.page { width: 746px; background: #fff; box-shadow: 0 0 16px rgba(0, 0, 0, .2); position: relative; }
.page > svg, .page > div, .page > button { position: absolute; }
.page .marks { left: 91px; top: 68px; width: 564px; height: 28px; stroke: #c3c3c3; }
.docmark { left: 116px; top: 129px; display: flex; align-items: center; gap: 7px; }
.docmark svg { width: 13px; height: 15px; stroke: none; }
.docmark .caret { border-top-color: #a9a9a9; }
.textbox { left: 178px; top: 126px; width: 302px; height: 268px; overflow: hidden; }
.lines { height: 274px; display: grid; grid-template-rows: repeat(14, 1fr); }
.lines p { font: 15px/20px "Noto Sans CJK SC", sans-serif; color: #000; height: 100%; min-height: 0; white-space: nowrap; }
.page .frame { left: 162px; top: 83px; width: 360px; height: 330px; }
.side-tools { left: 527px; top: 125px; display: flex; flex-direction: column; align-items: center; }
.round svg { width: 18px; height: 18px; }
.card { width: 28px; height: 28px; justify-content: center; background: #fff; border: 1px solid #dcdcdc; box-shadow: 2px 2px 4px rgba(0, 0, 0, .14); margin-top: 8px; }
.idea { margin-top: 128px; }
.paste { left: 479px; top: 147px; width: 34px; height: 27px; padding-left: 4px; gap: 4px; background: #dadfe6; }
.paste svg { width: 18px; height: 18px; }
.menu { left: 479px; top: 173px; width: 162px; height: 125px; padding: 2px 1px 0; background: #fff; border: 1px solid #c9ccd2; box-shadow: 1px 2px 5px rgba(0, 0, 0, .16); }
.menu button { height: 28px; width: 100%; padding-left: 4px; gap: 5px; }
.pic { width: 24px; height: 24px; display: flex; align-items: center; justify-content: center; }
.pic.on { background: #dadfe6; }
.menu hr { height: 1px; border: 0; background: #dfe1e5; margin: 4px 0; }

/* document scroll bar */
.scroll { width: 14px; background: #e9ebf1; display: flex; flex-direction: column; }
.scroll svg { stroke: none; fill: #8a93ab; width: 14px; height: 8px; }
.scroll .ruler { height: 18px; background: #f5f7f9; fill: #b5bccb; }
.scroll .tri { height: 6px; margin: 6px 0 9px; }
.thumb { flex: 619; width: 12px; border-radius: 6px; background: #d4d7e0; margin-left: 1px; }
.steps { flex: 221; display: flex; flex-direction: column; justify-content: flex-end; gap: 10px; padding-bottom: 8px; }

/* styles pane */
.styles { width: 262px; display: flex; flex-direction: column; padding: 0 13px 28px 12px; border-left: 1px solid #e1e4ea; color: #3c465c; }
.styles-head { display: flex; align-items: center; gap: 14px; height: 30px; margin: 0 -4px 0 -3px; }
.styles-head .caret { margin-left: 4px; }
.pick { position: relative; flex: 1; height: 24px; }
.pick select { appearance: none; width: 100%; height: 100%; border: 1px solid #d5d9e1; border-radius: 0; background: #fff; font: inherit; color: #3c465c; padding: 0 20px 0 3px; }
.pick::after { content: ""; position: absolute; right: 6px; top: 50%; margin-top: -2px; border: 3px solid transparent; border-top-color: #6b7690; border-bottom: 0; }
.pick-big { flex: none; height: 32px; margin-top: 9px; font-size: 16px; }
.pick-big select { color: #000; border-radius: 2px; padding-left: 5px; }
.pick-big::after { right: 9px; border-width: 4px 4px 0; }
.actions { display: flex; gap: 10px; margin-top: 7px; }
.actions button { width: 78px; height: 23px; justify-content: center; background: #fff; border: 1px solid #d5d9e1; }
.styles h3 { font-size: 14px; line-height: 20px; margin: 20px 0 6px; color: #454f66; }
.list { flex: 1; list-style: none; background: #fff; border: 1px solid #dfe2ea; border-radius: 2px; padding: 4px 12px 0 2px; color: #000; }
.list li { display: flex; justify-content: space-between; height: 34px; padding: 0 5px 0 4px; line-height: 32px; border: 1px solid transparent; font-family: "Noto Sans Mono CJK SC", "Liberation Mono", "Noto Sans CJK SC", monospace; font-weight: 700; }
.list svg { width: 10px; height: 9px; stroke: #000; margin-top: 8px; }
.list .tip { fill: #000; stroke: none; }
.list .h1 { font-size: 22px; }
.list .h2 { font-size: 21px; }
.list .h4 { font-size: 19px; }
.list .small { font-size: 13px; font-weight: 400; }
.list .small u { font-size: 12px; line-height: 26px; }
.list .sel { font-size: 16px; font-weight: 400; border-color: #4a90e8; padding-left: 3px; }
.show { display: flex; align-items: center; gap: 6px; margin-top: 7px; }
.show label { color: #1f2636; }
.preview { display: flex; justify-content: space-between; align-items: center; padding-right: 5px; margin-top: 11px; }
.preview label { display: flex; align-items: center; gap: 5px; color: #1f2636; }
.preview input { appearance: none; width: 13px; height: 13px; margin: 0; border: 1px solid #222; background: #fff; display: grid; place-items: center; }
.preview input::after { content: ""; width: 8px; height: 4px; border: solid #222; border-width: 0 0 1px 1px; transform: rotate(-45deg); margin-bottom: 2px; }
.preview a { display: flex; align-items: center; gap: 2px; color: #3f7ef5; text-decoration: none; }
.preview a svg { width: 14px; height: 14px; stroke: #eeaa3c; }

/* status bar */
.status { display: flex; align-items: center; height: 29px; padding: 0 14px 0 0; border-top: 1px solid #dfe2ea; }
.status .bar { height: 14px; }
.cell { padding: 0 5px 0 10px; border-right: 1px solid #dcdfe6; line-height: 14px; }
.check { gap: 3px; height: 24px; padding: 0 3px; margin: 0 2px 0 1px; border-radius: 2px; }
.check + .caret { margin-right: 4px; }
.hot { background: #e8f0fb; }
.status > button[aria-label] + .bar { margin: 0 11px 0 12px; }
.views { display: flex; align-items: center; gap: 2px; margin-right: 9px; }
.views button { width: 23px; height: 24px; justify-content: center; border-radius: 2px; }
.views .on { background: #d9dee6; }
.views + .bar { margin-right: 17px; }
.zoom { margin: 0 12px 0 7px; display: flex; align-items: center; gap: 4px; color: #3c465c; }
.slider { appearance: none; width: 145px; height: 14px; margin: 0 7px 0 12px; background: none; }
.slider::-webkit-slider-runnable-track { height: 1px; background: linear-gradient(90deg, #3c4a66 44%, #c3c8d3 44%); }
.slider::-webkit-slider-thumb { appearance: none; width: 12px; height: 12px; margin-top: -6px; border: 1px solid #4a4a4a; border-radius: 50%; background: #f5f7f9; }
.slider + button { margin-right: 12px; }

/* annotation arrows */
.arrow { position: absolute; z-index: 2; fill: #fd0000; stroke: #b80000; stroke-width: .4; filter: drop-shadow(2px 3px 2px rgba(0, 0, 0, .5)); overflow: visible; }
.arrow-insert { left: 336px; top: 61px; width: 30px; height: 130px; }
.arrow-box { left: 890px; top: 127px; width: 40px; height: 80px; }
.arrow-side { left: 48px; top: 275px; width: 90px; height: 20px; }

/* floating network meter */
.meter { position: fixed; right: 0; bottom: 6px; width: 120px; height: 60px; z-index: 4; }
.speed { position: absolute; left: 0; top: 9px; width: 90px; height: 42px; padding: 0 34px 0 11px; border-radius: 21px; background: rgba(36, 40, 52, .9); box-shadow: 0 1px 5px rgba(0, 0, 0, .4); color: #fff; display: flex; flex-direction: column; justify-content: center; gap: 6px; text-align: right; white-space: nowrap; }
.speed span { display: flex; justify-content: flex-end; font-size: 13px; line-height: 16px; }
.speed b { margin-right: auto; font-size: 14px; }
.up { color: #4db4f5; }
.down { color: #3ac04f; }
.speed small { font-size: 11px; color: #a5a9b4; }
.ball { position: absolute; right: 0; top: 0; width: 60px; height: 60px; }
.ball svg { width: 60px; height: 60px; }
.ball span { position: absolute; left: 14px; top: 14px; font: 24px/32px Lato, sans-serif; color: #fff; }
.ball small { font-size: 9px; }
.brand { position: fixed; right: 8px; bottom: 9px; width: 152px; display: flex; align-items: flex-start; gap: 1px; z-index: 5; opacity: .65; }
.brand svg { width: 42px; height: 40px; stroke: none; }
.brand strong { display: block; font-size: 21px; line-height: 26px; color: #1d66b0; white-space: nowrap; }
.brand em { display: block; font: 700 16px/16px "Liberation Sans", sans-serif; color: #2c9a50; }
```
